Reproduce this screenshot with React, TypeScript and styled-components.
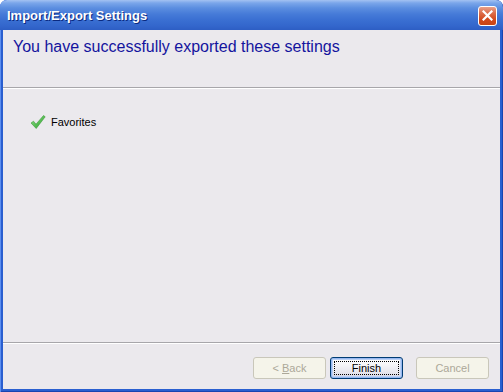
import React from "react";
import styled, { createGlobalStyle } from "styled-components";

const Global = createGlobalStyle`
  html, body { margin: 0; padding: 0; background: #ffffff; }
  body { font-family: "Liberation Sans", Arial, sans-serif; }
`;

const Window = styled.div`
  width: 503px;
  height: 392px;
  box-sizing: border-box;
  display: flex;
  flex-direction: column;
  border-radius: 7px 7px 0 0;
  background: #2a5fd0;
  padding: 0 3px 3px 3px;
  box-shadow: inset 1px 0 0 #5d8ff0, inset -1px 0 0 #1a44b0, inset 0 -1px 0 #1a44b0;
  overflow: hidden;
`;

const TitleBar = styled.div`
  height: 30px;
  margin: 0 -3px;
  padding: 0 6px 0 7px;
  display: flex;
  align-items: center;
  justify-content: space-between;
  border-radius: 7px 7px 0 0;
  background: linear-gradient(
    to bottom,
    #a3c2f2 0px,
    #7aa6ea 3px,
    #5b8ee0 8px,
    #467bd8 14px,
    #3a6fd2 20px,
    #3366cc 26px,
    #2d5ec4 30px
  );
`;

const Title = styled.span`
  color: #ffffff;
  font-family: "Liberation Sans", Arial, sans-serif;
  font-weight: bold;
  font-size: 13px;
  text-shadow: 1px 1px 0 #0a2a80;
  margin-top: 1px;
`;

const CloseButton = styled.div`
  width: 19px;
  height: 20px;
  box-sizing: border-box;
  margin-top: 1px;
  border: 1px solid #ffffff;
  border-radius: 3px;
  background: linear-gradient(to bottom, #e8a089 0%, #dc6b48 35%, #d2491c 70%, #c84414 100%);
  display: flex;
  align-items: center;
  justify-content: center;
`;

const Client = styled.div`
  flex: 1;
  background: #ebe9ed;
  display: flex;
  flex-direction: column;
`;

const Header = styled.div`
  height: 57px;
  box-sizing: border-box;
  padding: 7px 10px 0 10px;
`;

const HeaderText = styled.div`
  color: #14149e;
  font-family: "Liberation Sans", Arial, sans-serif;
  font-size: 16px;
  line-height: 19px;
`;

const Separator = styled.div`
  height: 1px;
  background: #a7a6aa;
  border-bottom: 1px solid #ffffff;
`;

const Content = styled.div`
  flex: 1;
  padding: 25px 27px;
  display: flex;
  flex-direction: column;
`;

const Item = styled.div`
  display: flex;
  align-items: center;
  gap: 5px;
`;

const ItemText = styled.span`
  font-family: "Liberation Sans", Arial, sans-serif;
  font-size: 11px;
  color: #000000;
`;

const Footer = styled.div`
  height: 45px;
  box-sizing: border-box;
  padding: 13px 11px 0 0;
  display: flex;
  justify-content: flex-end;
  align-items: flex-start;
`;

const Button = styled.div<{ $disabled?: boolean; $default?: boolean; $gap?: number }>`
  width: 73px;
  height: 22px;
  box-sizing: border-box;
  margin-left: ${(p) => p.$gap ?? 0}px;
  border-radius: 3px;
  font-family: "Liberation Sans", Arial, sans-serif;
  font-size: 11px;
  white-space: pre;
  display: flex;
  align-items: center;
  justify-content: center;
  position: relative;
  border: 1px solid ${(p) => (p.$disabled ? "#c9c7ba" : "#003c74")};
  color: ${(p) => (p.$disabled ? "#aca899" : "#000000")};
  background: ${(p) =>
    p.$disabled
      ? "#f5f4ea"
      : "linear-gradient(to bottom, #ffffff 0%, #f3f3f6 40%, #e3e2ea 80%, #cfcde0 100%)"};
  box-shadow: ${(p) =>
    p.$default ? "inset 0 0 0 1px #97b8f0, inset 0 0 0 2px #bcd2f6" : "none"};
`;

const FocusRing = styled.div`
  position: absolute;
  inset: 3px;
  border: 1px dotted #000000;
  pointer-events: none;
`;

const Accel = styled.span`
  text-decoration: underline;
`;

const CheckIcon = () => (
  <svg width="16" height="16" viewBox="0 0 16 16">
    <defs>
      <linearGradient id="ck" x1="0" y1="0" x2="1" y2="1">
        <stop offset="0" stopColor="#8fe08a" />
        <stop offset="1" stopColor="#2aa02a" />
      </linearGradient>
    </defs>
    <path
      d="M1 9 L3.5 7.2 L6 10.2 L13.5 1.5 L15.2 2.8 L6.2 14.5 Z"
      fill="url(#ck)"
      stroke="#3d9a37"
      strokeWidth="0.6"
      strokeLinejoin="round"
    />
  </svg>
);

const CloseIcon = () => (
  <svg width="11" height="11" viewBox="0 0 11 11">
    <path d="M1.5 1.5 L9.5 9.5 M9.5 1.5 L1.5 9.5" stroke="#ffffff" strokeWidth="2.2" strokeLinecap="square" />
  </svg>
);

export default function App() {
  return (
    <>
      <Global />
      <Window>
        <TitleBar>
          <Title>Import/Export Settings</Title>
          <CloseButton>
            <CloseIcon />
          </CloseButton>
        </TitleBar>
        <Client>
          <Header>
            <HeaderText>You have successfully exported these settings</HeaderText>
          </Header>
          <Separator />
          <Content>
            <Item>
              <CheckIcon />
              <ItemText>Favorites</ItemText>
            </Item>
          </Content>
          <Separator />
          <Footer>
            <Button $disabled>
              {"< "}
              <Accel>B</Accel>
              {"ack"}
            </Button>
            <Button $default $gap={4}>
              Finish
              <FocusRing />
            </Button>
            <Button $disabled $gap={13}>
              Cancel
            </Button>
          </Footer>
        </Client>
      </Window>
    </>
  );
}
